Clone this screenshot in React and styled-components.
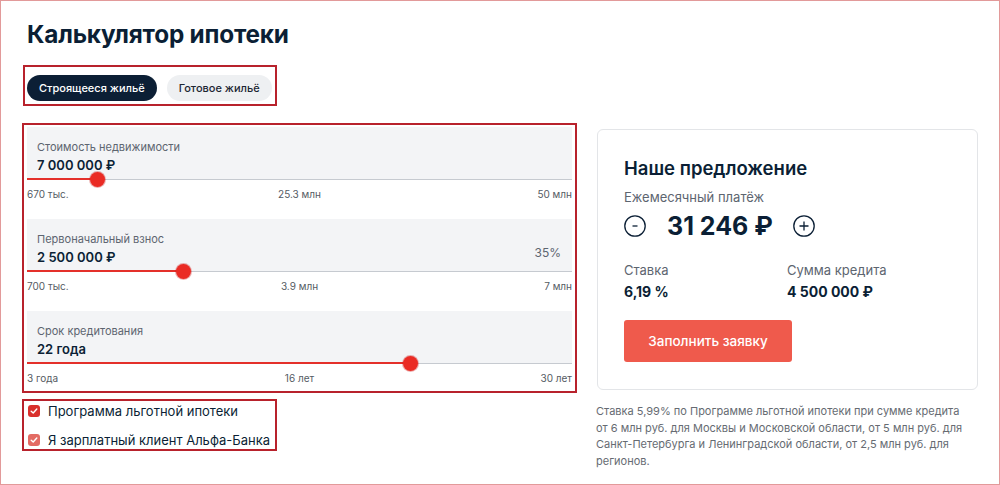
import React from 'react';
import styled, { createGlobalStyle } from 'styled-components';

const GlobalStyle = createGlobalStyle`
    html, body {
        margin: 0;
        padding: 0;
        background: #fff;
    }
    body {
        font-family: Inter, "Noto Sans", sans-serif;
        color: #0b1f35;
    }
    * {
        box-sizing: border-box;
    }
`;

const sliders = [
    { label: 'Стоимость недвижимости', value: '7 000 000 ₽', pos: 12.9, ticks: ['670 тыс.', '25.3 млн', '50 млн'] },
    { label: 'Первоначальный взнос', value: '2 500 000 ₽', pos: 28.7, extra: '35%', ticks: ['700 тыс.', '3.9 млн', '7 млн'] },
    { label: 'Срок кредитования', value: '22 года', pos: 70.4, ticks: ['3 года', '16 лет', '30 лет'] },
];

function Slider({ item }) {
    return (
        <SliderBlock>
            <Field>
                <FieldLabel>{item.label}</FieldLabel>
                <FieldValue>{item.value}</FieldValue>
                {item.extra && <FieldExtra>{item.extra}</FieldExtra>}
                <Track>
                    <Fill style={{ width: item.pos + '%' }} />
                    <Thumb style={{ left: item.pos + '%' }} />
                </Track>
            </Field>
            <Ticks>
                {item.ticks.map((t) => <span key={t}>{t}</span>)}
            </Ticks>
        </SliderBlock>
    );
}

function Check({ light, children }) {
    return (
        <CheckRow>
            <CheckBox $light={light}>
                <svg width="8" height="8" viewBox="0 0 8 8">
                    <path d="M1.2 4.2 L3.2 6 L6.8 2" fill="none" stroke="#fff" strokeWidth="1.4" strokeLinecap="round" strokeLinejoin="round" />
                </svg>
            </CheckBox>
            {children}
        </CheckRow>
    );
}

function RoundButton({ plus }) {
    return (
        <Round>
            <svg width="22" height="22" viewBox="0 0 22 22">
                <circle cx="11" cy="11" r="10.2" fill="none" stroke="#0b1f35" strokeWidth="1.3" />
                <path d={plus ? 'M6.5 11 H15.5 M11 6.5 V15.5' : 'M8.5 11 H13.5'} stroke="#0b1f35" strokeWidth="1.3" />
            </svg>
        </Round>
    );
}

function App() {
    return (
        <>
            <GlobalStyle />
            <Frame>
                <Title>Калькулятор ипотеки</Title>
                <Tabs>
                    <Tab $active>Строящееся жильё</Tab>
                    <Tab>Готовое жильё</Tab>
                </Tabs>
                <Columns>
                    <div>
                        <Calculator>
                            {sliders.map((s) => <Slider key={s.label} item={s} />)}
                        </Calculator>
                        <Checks>
                            <Check>Программа льготной ипотеки</Check>
                            <Check light>Я зарплатный клиент Альфа-Банка</Check>
                        </Checks>
                    </div>
                    <Side>
                        <Card>
                            <CardTitle>Наше предложение</CardTitle>
                            <MutedLabel>Ежемесячный платёж</MutedLabel>
                            <Payment>
                                <RoundButton />
                                <Amount>31 246 ₽</Amount>
                                <RoundButton plus />
                            </Payment>
                            <Stats>
                                <div>
                                    <MutedLabel>Ставка</MutedLabel>
                                    <StatValue>6,19 %</StatValue>
                                </div>
                                <div>
                                    <MutedLabel>Сумма кредита</MutedLabel>
                                    <StatValue>4 500 000 ₽</StatValue>
                                </div>
                            </Stats>
                            <Submit>Заполнить заявку</Submit>
                        </Card>
                        <Note>
                            Ставка 5,99% по Программе льготной ипотеки при сумме кредита от 6 млн руб. для Москвы и Московской области, от 5 млн руб. для Санкт-Петербурга и Ленинградской области, от 2,5 млн руб. для регионов.
                        </Note>
                    </Side>
                </Columns>
            </Frame>
        </>
    );
}

export default App;

const Frame = styled.div`
    width: 1000px;
    height: 485px;
    border: 1px solid #e29a9a;
    padding: 17px 21px 0 21px;
    overflow: hidden;
`;

const Title = styled.h1`
    margin: 0 0 15px 5px;
    font-size: 24.3px;
    line-height: 32px;
    font-weight: 700;
    letter-spacing: -0.2px;
    color: #0b1f35;
`;

const Tabs = styled.div`
    display: inline-flex;
    gap: 10px;
    margin-left: 1px;
    padding: 8px 3px 3px 2px;
    border: 2px solid #b8222c;
`;

const Tab = styled.div`
    height: 26px;
    padding: 0 12px;
    border-radius: 13px;
    display: flex;
    align-items: center;
    font-size: 11px;
    font-weight: 500;
    background: ${(p) => (p.$active ? '#0c1f35' : '#eef0f2')};
    color: ${(p) => (p.$active ? '#fff' : '#1c2633')};
`;

const Columns = styled.div`
    display: grid;
    grid-template-columns: 555px 381px;
    column-gap: 20px;
    margin-top: 17px;
    align-items: start;
`;

const Calculator = styled.div`
    border: 2px solid #b8222c;
    padding: 2px 3px 0 3px;
    width: 555px;
`;

const SliderBlock = styled.div`
    padding-bottom: 19px;
    &:last-child {
        padding-bottom: 7px;
    }
`;

const Field = styled.div`
    position: relative;
    background: #f3f4f6;
    padding: 14px 10px 10px;
    height: 53px;
`;

const FieldLabel = styled.div`
    font-size: 11px;
    line-height: 13px;
    color: #5d6570;
`;

const FieldValue = styled.div`
    margin-top: 3px;
    font-size: 13px;
    line-height: 17px;
    font-weight: 600;
    color: #0b1f35;
`;

const FieldExtra = styled.div`
    position: absolute;
    right: 11px;
    top: 26px;
    font-size: 12px;
    color: #5d6570;
`;

const Track = styled.div`
    position: absolute;
    left: 0;
    right: 0;
    bottom: 0;
    height: 1px;
    background: #c6cad0;
`;

const Fill = styled.div`
    position: absolute;
    left: 0;
    top: -1px;
    height: 2px;
    background: #e4302a;
`;

const Thumb = styled.div`
    position: absolute;
    top: 0;
    width: 15px;
    height: 15px;
    margin: -7.5px 0 0 -7.5px;
    border-radius: 50%;
    background: #ea2b24;
    box-shadow: 0 0 0 1px rgba(200, 30, 30, 0.35);
`;

const Ticks = styled.div`
    display: grid;
    grid-template-columns: 1fr 1fr 1fr;
    margin-top: 8px;
    font-size: 10px;
    line-height: 12px;
    color: #555b63;

    span:nth-child(2) {
        text-align: center;
    }
    span:nth-child(3) {
        text-align: right;
    }
`;

const Checks = styled.div`
    margin-top: 6px;
    width: 255px;
    border: 2px solid #b8222c;
    padding: 1px 0 0 4px;
    display: flex;
    flex-direction: column;
    gap: 11px;
`;

const CheckRow = styled.div`
    display: flex;
    align-items: center;
    gap: 8px;
    font-size: 13px;
    line-height: 18px;
    color: #0b1f35;
`;

const CheckBox = styled.span`
    width: 12px;
    height: 12px;
    border-radius: 3px;
    display: flex;
    align-items: center;
    justify-content: center;
    background: ${(p) => (p.$light ? '#e36b63' : '#d9302c')};
`;

const Side = styled.div`
    margin-top: 6px;
`;

const Card = styled.div`
    border: 1px solid #e3e5e8;
    border-radius: 6px;
    padding: 26px 26px 26px;
    height: 261px;
`;

const CardTitle = styled.div`
    font-size: 18.5px;
    line-height: 24px;
    font-weight: 600;
    color: #0b1f35;
    margin-bottom: 9px;
`;

const MutedLabel = styled.div`
    font-size: 13px;
    line-height: 16px;
    color: #5d6570;
`;

const Payment = styled.div`
    display: flex;
    align-items: center;
    margin-top: 5px;
    height: 32px;
`;

const Round = styled.span`
    display: flex;
`;

const Amount = styled.div`
    font-size: 25px;
    font-weight: 700;
    margin: 0 20px 0 21px;
    color: #0b1f35;
`;

const Stats = styled.div`
    display: grid;
    grid-template-columns: 163px 1fr;
    margin-top: 20px;
`;

const StatValue = styled.div`
    margin-top: 5px;
    font-size: 14px;
    line-height: 18px;
    font-weight: 700;
    color: #0b1f35;
`;

const Submit = styled.button`
    margin-top: 19px;
    width: 168px;
    height: 42px;
    border: 0;
    border-radius: 3px;
    background: #ef5a4c;
    color: #fff;
    font-family: inherit;
    font-size: 13.5px;
    font-weight: 500;
`;

const Note = styled.p`
    margin: 13px 0 0 -1px;
    width: 374px;
    font-size: 11px;
    line-height: 16.7px;
    color: #666b72;
`;
